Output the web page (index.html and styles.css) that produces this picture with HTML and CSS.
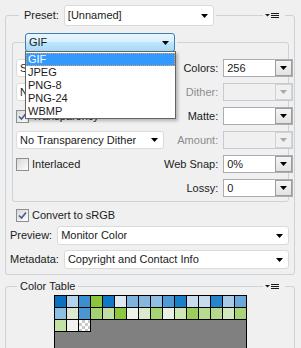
FILE: index.html
```html
<!DOCTYPE html>
<html lang="en">
<head>
<meta charset="utf-8">
<title>Optimize</title>
<link rel="stylesheet" href="styles.css">
</head>
<body>
<div class="panel">
  <fieldset class="group settings">
    <legend class="preset-legend">
      <div class="legend-row">
        <span class="field-label">Preset:</span>
        <div class="select preset-select"><span class="select-text">[Unnamed]</span><svg class="arrow" viewBox="0 0 7 4"><path d="M0 0H7L3.5 4Z"/></svg></div>
      </div>
    </legend>

    <fieldset class="group format-group">
      <legend class="format-legend">
        <div class="format-wrap">
          <div class="select format-select"><span class="select-text">GIF</span><svg class="arrow" viewBox="0 0 7 4"><path d="M0 0H7L3.5 4Z"/></svg></div>
          <ul class="format-list">
            <li class="format-item is-active">GIF</li>
            <li class="format-item">JPEG</li>
            <li class="format-item">PNG-8</li>
            <li class="format-item">PNG-24</li>
            <li class="format-item">WBMP</li>
          </ul>
        </div>
      </legend>

      <div class="opt-grid">
        <div class="select"><span class="select-text">Selective</span><svg class="arrow" viewBox="0 0 7 4"><path d="M0 0H7L3.5 4Z"/></svg></div>
        <span class="opt-label">Colors:</span>
        <div class="combo"><span class="combo-text">256</span><span class="combo-btn"><svg class="arrow" viewBox="0 0 7 4"><path d="M0 0H7L3.5 4Z"/></svg></span></div>

        <div class="select"><span class="select-text">No Dither</span><svg class="arrow" viewBox="0 0 7 4"><path d="M0 0H7L3.5 4Z"/></svg></div>
        <span class="opt-label is-disabled">Dither:</span>
        <div class="combo is-disabled"><span class="combo-text"></span><span class="combo-btn"><svg class="arrow" viewBox="0 0 7 4"><path d="M0 0H7L3.5 4Z"/></svg></span></div>

        <label class="check"><span class="checkbox"><svg viewBox="0 0 9 9"><path d="M1 4.5L3.5 7L8 1.5"/></svg></span>Transparency</label>
        <span class="opt-label">Matte:</span>
        <div class="combo"><span class="combo-text"></span><span class="combo-btn"><svg class="arrow" viewBox="0 0 7 4"><path d="M0 0H7L3.5 4Z"/></svg></span></div>

        <div class="select"><span class="select-text">No Transparency Dither</span><svg class="arrow" viewBox="0 0 7 4"><path d="M0 0H7L3.5 4Z"/></svg></div>
        <span class="opt-label is-disabled">Amount:</span>
        <div class="combo is-disabled"><span class="combo-text"></span><span class="combo-btn"><svg class="arrow" viewBox="0 0 7 4"><path d="M0 0H7L3.5 4Z"/></svg></span></div>

        <label class="check"><span class="checkbox is-empty"></span>Interlaced</label>
        <span class="opt-label">Web Snap:</span>
        <div class="combo"><span class="combo-text">0%</span><span class="combo-btn"><svg class="arrow" viewBox="0 0 7 4"><path d="M0 0H7L3.5 4Z"/></svg></span></div>

        <span class="spacer"></span>
        <span class="opt-label">Lossy:</span>
        <div class="combo"><span class="combo-text">0</span><span class="combo-btn"><svg class="arrow" viewBox="0 0 7 4"><path d="M0 0H7L3.5 4Z"/></svg></span></div>
      </div>
    </fieldset>

    <label class="check convert"><span class="checkbox"><svg viewBox="0 0 9 9"><path d="M1 4.5L3.5 7L8 1.5"/></svg></span>Convert to sRGB</label>

    <div class="field-row">
      <span class="field-label">Preview:</span>
      <div class="select"><span class="select-text">Monitor Color</span><svg class="arrow" viewBox="0 0 7 4"><path d="M0 0H7L3.5 4Z"/></svg></div>
    </div>
    <div class="field-row">
      <span class="field-label">Metadata:</span>
      <div class="select"><span class="select-text">Copyright and Contact Info</span><svg class="arrow" viewBox="0 0 7 4"><path d="M0 0H7L3.5 4Z"/></svg></div>
    </div>
  </fieldset>
  <span class="panel-menu"><svg viewBox="0 0 22 10" width="22" height="10"><path d="M2 4H7L4.5 6.5Z"/><rect x="8" y="3" width="8" height="1"/><rect x="8" y="5" width="8" height="1"/><rect x="8" y="7" width="8" height="1"/></svg></span>
</div>

<div class="panel table-panel">
  <fieldset class="group color-table">
    <legend class="table-legend">Color Table</legend>
    <div class="swatches">
      <span class="swatch" style="background:#0c70c0"></span>
      <span class="swatch" style="background:#b3d2ec"></span>
      <span class="swatch" style="background:#3b8fd0"></span>
      <span class="swatch" style="background:#8cc63e"></span>
      <span class="swatch" style="background:#0f78c8"></span>
      <span class="swatch" style="background:#dfe9f2"></span>
      <span class="swatch" style="background:#7cb3df"></span>
      <span class="swatch" style="background:#84b8e1"></span>
      <span class="swatch" style="background:#8fc0e3"></span>
      <span class="swatch" style="background:#509ad6"></span>
      <span class="swatch" style="background:#1a7fc9"></span>
      <span class="swatch" style="background:#c7ddef"></span>
      <span class="swatch" style="background:#c5dcee"></span>
      <span class="swatch" style="background:#2585cd"></span>
      <span class="swatch" style="background:#a7cae9"></span>
      <span class="swatch" style="background:#6aa7db"></span>

      <span class="swatch" style="background:#8dbfe3"></span>
      <span class="swatch" style="background:#dde8d2"></span>
      <span class="swatch" style="background:#4a97d4"></span>
      <span class="swatch" style="background:#a5d273"></span>
      <span class="swatch" style="background:#c2dfa3"></span>
      <span class="swatch" style="background:#8dc63f"></span>
      <span class="swatch" style="background:#edf2ea"></span>
      <span class="swatch" style="background:#dde9cc"></span>
      <span class="swatch" style="background:#a6d474"></span>
      <span class="swatch" style="background:#e9f1e3"></span>
      <span class="swatch" style="background:#cee5b6"></span>
      <span class="swatch" style="background:#9ccd5b"></span>
      <span class="swatch" style="background:#b8db92"></span>
      <span class="swatch" style="background:#b5d98c"></span>
      <span class="swatch" style="background:#d5e8c1"></span>
      <span class="swatch" style="background:#a9d477"></span>

      <span class="swatch" style="background:#c4e2a4"></span>
      <span class="swatch" style="background:#f1f2f0"></span>
      <span class="swatch is-clear"></span>
    </div>
  </fieldset>
  <span class="panel-menu"><svg viewBox="0 0 22 10" width="22" height="10"><path d="M2 4H7L4.5 6.5Z"/><rect x="8" y="3" width="8" height="1"/><rect x="8" y="5" width="8" height="1"/><rect x="8" y="7" width="8" height="1"/></svg></span>
</div>
</body>
</html>
```

FILE: styles.css
```css
* { box-sizing: border-box; }

html, body { margin: 0; padding: 0; }

body {
  width: 301px;
  height: 348px;
  overflow: hidden;
  background: #f0f0f0;
  padding: 5px 0 0 5px;
  font: 11px/13px "Liberation Sans", Arial, sans-serif;
  color: #1b1b1b;
}

.panel { position: relative; width: 290px; }
.table-panel { margin-top: 5px; }

.group {
  margin: 0;
  padding: 0;
  min-width: 0;
  border: 1px solid #cbd2d8;
  border-radius: 3px;
}

.settings { padding: 0 5px 5px 4px; }

.preset-legend { margin-left: 9px; padding: 0 2px 0 5px; }

.legend-row { display: flex; align-items: center; gap: 5px; }

.field-label { white-space: nowrap; }

.select {
  display: flex;
  align-items: center;
  justify-content: space-between;
  height: 18px;
  padding: 0 5px 0 3px;
  background: #fff;
  border: 1px solid #dadada;
  border-radius: 3px;
}

.select-text { white-space: nowrap; overflow: hidden; }

.arrow { width: 7px; height: 4px; fill: #000; flex: none; }

.preset-select { width: 150px; height: 21px; }

.format-group { margin: 7px 0 0 2px; padding: 7px 4px 4px 3px; }

.format-legend { margin-left: 9px; padding: 0 2px 0 0; }

.format-wrap { position: relative; }

.format-select {
  width: 150px;
  height: 19px;
  border-color: #3c7fb1;
  background: linear-gradient(#eaf6fd 0%, #d9f0fc 45%, #bee6fd 50%, #a7d9f5 100%);
}

.format-list {
  position: absolute;
  top: 18px;
  left: 0;
  z-index: 2;
  width: 151px;
  margin: 0;
  padding: 1px 0 0;
  list-style: none;
  background: #fff;
  border: 1px solid #646464;
  box-shadow: 2px 2px 3px rgba(0, 0, 0, .25);
}

.format-item { height: 13px; line-height: 13px; padding-left: 2px; }

.format-item.is-active {
  background: #3399ff;
  color: #fff;
  outline: 1px dotted #e8a24e;
  outline-offset: -1px;
}

.opt-grid {
  display: grid;
  grid-template-columns: 148px 1fr 70px;
  grid-auto-rows: 18px;
  row-gap: 6px;
  align-items: center;
}

.opt-grid > .select { height: 18px; }

.opt-label { text-align: right; padding-right: 5px; white-space: nowrap; }

.is-disabled { color: #8d8d8d; }

.combo {
  display: flex;
  height: 18px;
  background: #fff;
  border: 1px solid #abadb3;
}

.combo-text { flex: 1; padding-left: 3px; line-height: 16px; }

.combo-btn {
  width: 17px;
  display: flex;
  align-items: center;
  justify-content: center;
  border: 1px solid #9c9c9c;
  background: linear-gradient(#f5f5f5, #e2e2e2);
}

.combo.is-disabled { background: #f0f0f0; border-color: #c3ccd6; }
.combo.is-disabled .combo-btn { border-color: #d2d2d2; background: #f0f0f0; }
.combo.is-disabled .arrow { fill: #a8a8a8; }

.check { display: flex; align-items: center; gap: 3px; white-space: nowrap; }

.checkbox {
  flex: none;
  width: 13px;
  height: 13px;
  display: flex;
  align-items: center;
  justify-content: center;
  border: 1px solid #8e8f8f;
  background: linear-gradient(135deg, #d8d8d8, #fdfdfd);
}

.checkbox svg { width: 9px; height: 9px; fill: none; stroke: #4b5f8e; stroke-width: 1.7; }

.convert { margin: 7px 0 0 6px; }

.field-row { display: flex; align-items: center; gap: 5px; margin-top: 5px; }
.convert + .field-row { margin-top: 4px; }
.field-row .select { flex: 1; height: 19px; }

.table-legend { margin-left: 11px; padding: 0 3px; line-height: 13px; }

.swatches {
  margin: 2px 0 0 48px;
  width: 193px;
  height: 60px;
  display: grid;
  grid-template-columns: repeat(15, 12px) 11px;
  grid-auto-rows: 12px;
  background: #808080;
  border: 1px solid #000;
}

.swatch { border-right: 1px solid #000; border-bottom: 1px solid #000; }
.swatch:nth-child(16n) { border-right: 0; }

.swatch.is-clear {
  background: conic-gradient(#c9c9c9 25%, #fff 0 50%, #c9c9c9 0 75%, #fff 0) 0 0 / 6px 6px;
}

.panel-menu {
  position: absolute;
  left: 258px;
  top: 5px;
  display: block;
  width: 22px;
  height: 10px;
  background: #f0f0f0;
}

.panel-menu svg { display: block; fill: #1b1b1b; }

.table-panel .panel-menu { top: 1px; }
```
